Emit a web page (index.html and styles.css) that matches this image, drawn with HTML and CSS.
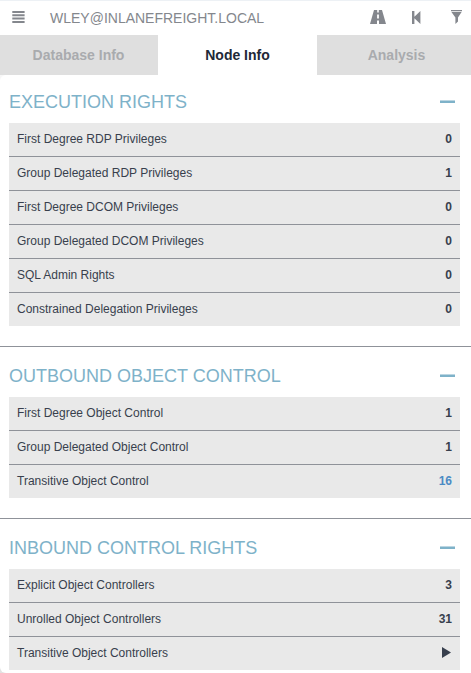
FILE: index.html
```
<!DOCTYPE html>
<html lang="en">
<head>
<meta charset="utf-8">
<title>Node Info</title>
<link rel="stylesheet" href="styles.css">
</head>
<body>
<header class="search">
  <svg class="icon menu" width="13" height="12" viewBox="0 0 13 12"><path d="M.3 0H12.6V2H.3ZM.3 3.3H12.6V5.3H.3ZM.3 6.6H12.6V8.6H.3ZM.3 10H12.6V12H.3Z"/></svg>
  <span class="query">WLEY@INLANEFREIGHT.LOCAL</span>
  <svg class="icon road" width="16" height="14" viewBox="0 0 16 14"><path d="M4 0H7.2V2.5H8.8V0H12L16 14H9V10.5H7V14H0ZM7.1 4.5V8.5H8.9V4.5Z" fill-rule="evenodd"/></svg>
  <svg class="icon back" width="9" height="13" viewBox="0 0 9 13"><path d="M0 0H2.4V5.8L8.4 0V13L2.4 7.2V13H0Z"/></svg>
  <svg class="icon filter" width="11" height="14" viewBox="0 0 11 14"><path d="M0 0H11V1.3H0ZM.4 2H10.6L7 7.5V11.5L4.4 14V7.5Z"/></svg>
</header>
<nav class="tabs">
  <span class="tab">Database Info</span>
  <span class="tab active">Node Info</span>
  <span class="tab">Analysis</span>
</nav>
<main class="panel">
  <section class="group">
    <h2>EXECUTION RIGHTS<i class="collapse"></i></h2>
    <ul>
      <li>First Degree RDP Privileges<b>0</b></li>
      <li>Group Delegated RDP Privileges<b>1</b></li>
      <li>First Degree DCOM Privileges<b>0</b></li>
      <li>Group Delegated DCOM Privileges<b>0</b></li>
      <li>SQL Admin Rights<b>0</b></li>
      <li>Constrained Delegation Privileges<b>0</b></li>
    </ul>
  </section>
  <section class="group">
    <h2>OUTBOUND OBJECT CONTROL<i class="collapse"></i></h2>
    <ul>
      <li>First Degree Object Control<b>1</b></li>
      <li>Group Delegated Object Control<b>1</b></li>
      <li>Transitive Object Control<b class="link">16</b></li>
    </ul>
  </section>
  <section class="group">
    <h2>INBOUND CONTROL RIGHTS<i class="collapse"></i></h2>
    <ul>
      <li>Explicit Object Controllers<b>3</b></li>
      <li>Unrolled Object Controllers<b>31</b></li>
      <li>Transitive Object Controllers<svg class="play" width="9" height="11" viewBox="0 0 9 11"><path d="M0 0L9 5.5L0 11Z"/></svg></li>
    </ul>
  </section>
</main>
</body>
</html>
```
FILE: styles.css
```
* { box-sizing: border-box; }
body {
  margin: 0;
  height: 673px;
  overflow: hidden;
  background: linear-gradient(#f7f7f7 50%, #e2e2e2 50%);
  color: #383f4d;
  font: 12px/17px "Liberation Sans", Arial, sans-serif;
}
.search {
  display: flex;
  align-items: flex-start;
  height: 35px;
  border-top: 1px solid #edf1f5;
  background: #fff;
  color: #84878d;
}
.icon { flex: none; fill: #84878d; }
.menu { margin: 10px 0 0 12px; }
.query { margin-left: 25px; font-size: 14px; line-height: 34px; }
.road { margin: 9px 0 0 auto; }
.back { margin: 10px 0 0 26px; }
.filter { margin: 9px 9px 0 30px; }
.tabs {
  display: grid;
  grid-template-columns: 158px 159px 154px;
  height: 40px;
  background: #dfdfdf;
}
.tab {
  color: #a9abae;
  font-size: 14px;
  font-weight: bold;
  line-height: 40px;
  text-align: center;
}
.tab:first-child { padding-right: 1px; }
.tab:last-child { padding-left: 5px; }
.active { background: #fff; color: #212837; }
.panel {
  height: 598px;
  overflow: hidden;
  background: #fff;
  border-radius: 6px 0 0 6px;
}
.group { padding: 18px 11px 20px 9px; }
.group:first-child { padding-top: 15px; }
.group + .group { border-top: 1px solid #8f9299; padding-top: 17px; }
h2 {
  display: flex;
  justify-content: space-between;
  margin: 0;
  height: 33px;
  color: #7eb2c9;
  font-size: 18px;
  font-weight: normal;
  line-height: 24px;
}
.collapse {
  width: 15px;
  height: 3px;
  margin: 10px 5px 0 0;
  background: #7eb2c9;
  border-top: 1px solid #bcd6e2;
}
ul { margin: 0; padding: 0; list-style: none; background: #e9e9e9; }
li {
  display: flex;
  align-items: center;
  justify-content: space-between;
  height: 34px;
  padding: 0 8px;
  border-bottom: 1px solid #8f9299;
}
li:last-child { height: 33px; border-bottom: 0; }
.link { color: #4b8bc4; }
.play { margin: 0 1px 2px 0; fill: #383f4d; }
```
